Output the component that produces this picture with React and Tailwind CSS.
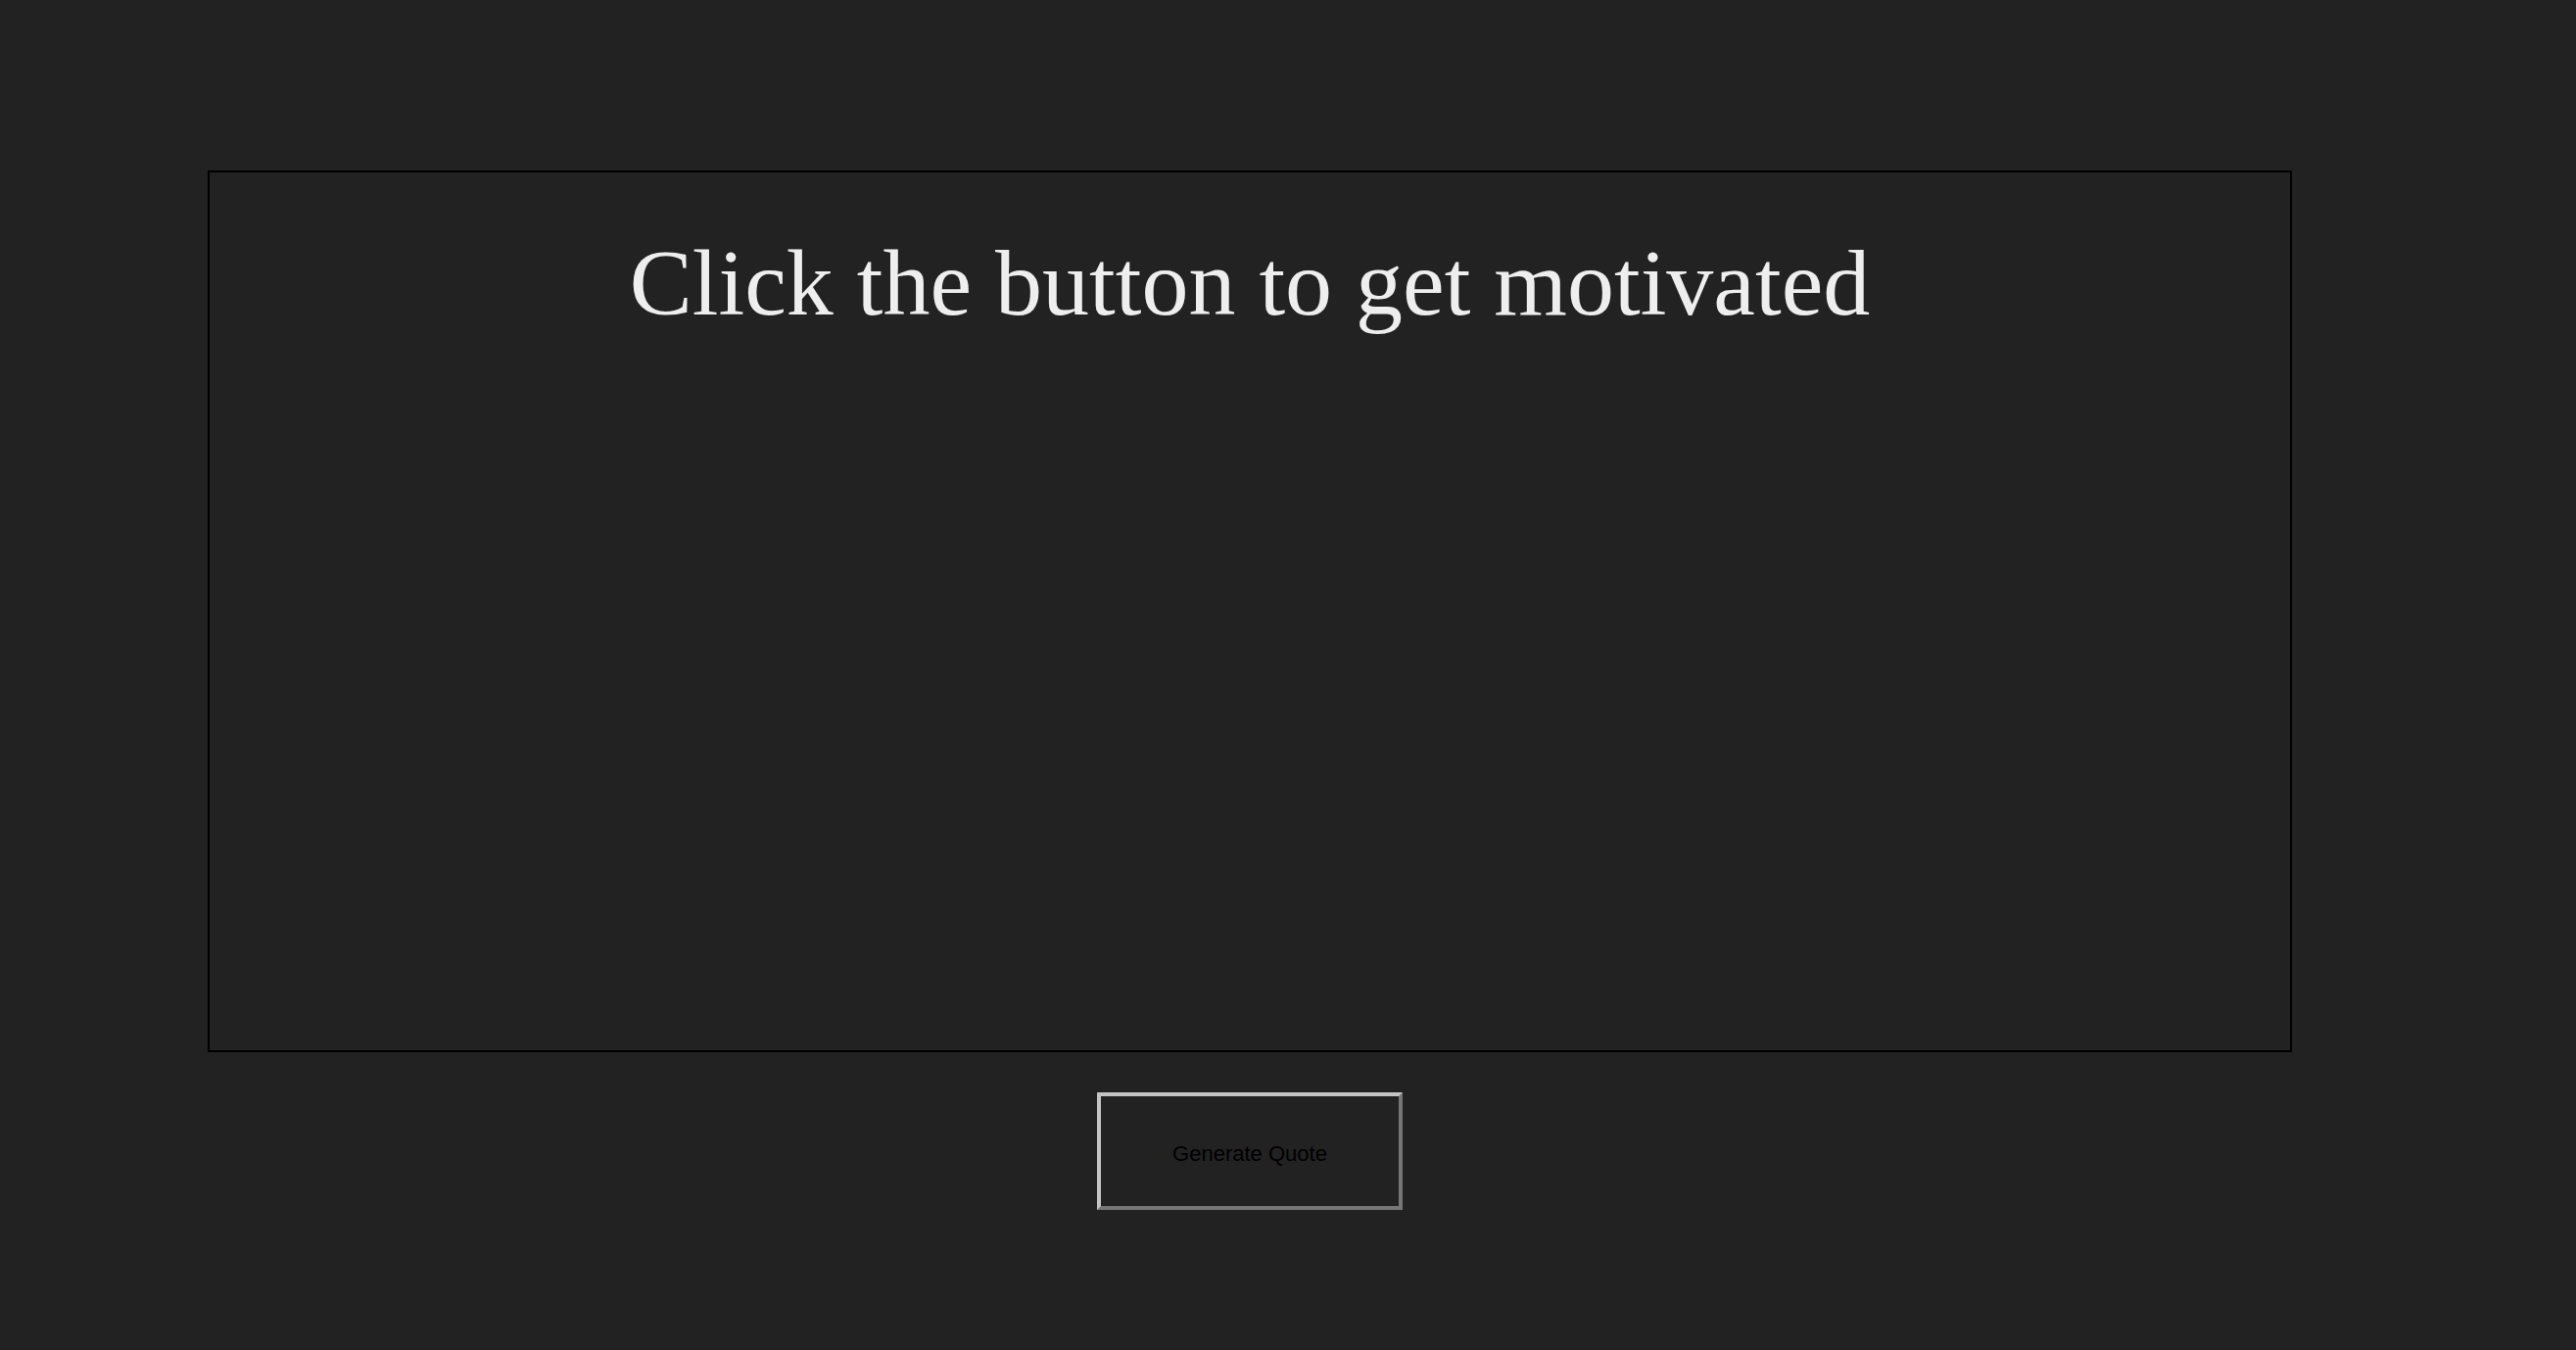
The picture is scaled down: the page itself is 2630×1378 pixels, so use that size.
export default function App() {
  return (
    <div className="min-h-screen w-full bg-[#222222] pt-[174px] pl-[212px]">
      {/* Quote box */}
      <div className="w-[2128px] h-[900px] border-2 border-black pt-[58px] text-center">
        <h1 className="font-['Liberation_Serif','Times_New_Roman',serif] text-[96px] leading-[1.15] text-[#eeeeee]">
          Click the button to get motivated
        </h1>
      </div>

      <div className="w-[2128px] flex justify-center mt-[41px]">
        <button className="w-[312px] h-[120px] pt-[4px] border-4 border-t-[#c4c4c4] border-l-[#c4c4c4] border-b-[#767676] border-r-[#767676] bg-transparent font-['Liberation_Sans',Arial,sans-serif] text-[22px] text-black">
          Generate Quote
        </button>
      </div>
    </div>
  );
}
